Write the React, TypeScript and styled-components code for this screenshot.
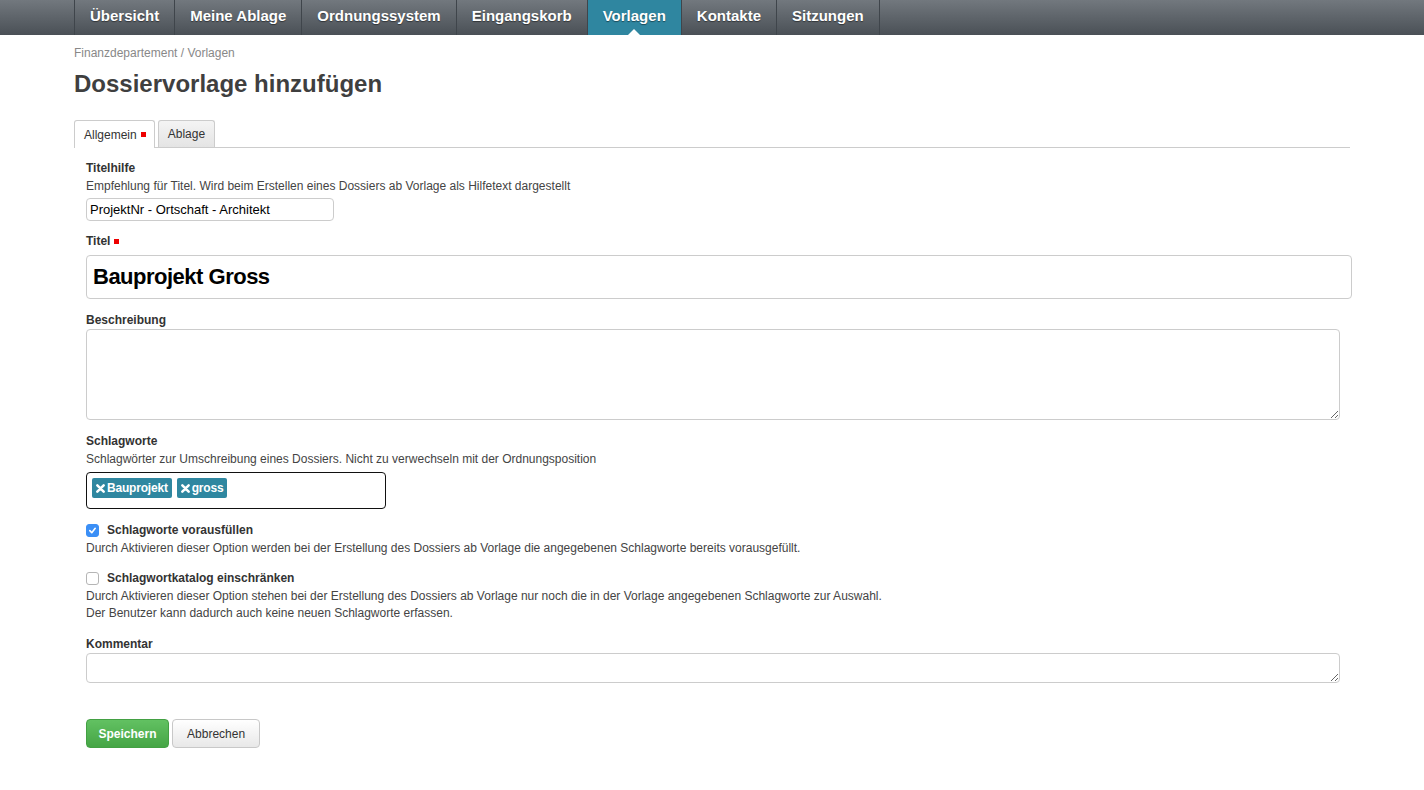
import React from "react";
import styled, { createGlobalStyle } from "styled-components";

const Global = createGlobalStyle`
  html, body { margin: 0; padding: 0; background: #fff; }
  body { font-family: "Liberation Sans", Arial, sans-serif; color: #444; }
  * { box-sizing: border-box; }
`;

const NavBar = styled.nav`
  height: 35px;
  background: linear-gradient(#72787e, #4a5056);
  padding-left: 74px;
  display: flex;
`;

const NavItem = styled.a<{ $active?: boolean }>`
  position: relative;
  display: flex;
  align-items: center;
  padding: 0 15px 4px;
  height: 35px;
  border-left: 1px solid #3f454b;
  font-size: 15px;
  font-weight: bold;
  color: #fff;
  text-shadow: 0 1px 1px rgba(0, 0, 0, 0.45);
  text-decoration: none;
  background: ${(p) => (p.$active ? "#2f86a0" : "transparent")};
  &:last-child { border-right: 1px solid #3f454b; }
`;

const Caret = styled.span`
  position: absolute;
  left: 50%;
  bottom: 0;
  margin-left: -6px;
  width: 0;
  height: 0;
  border-left: 6px solid transparent;
  border-right: 6px solid transparent;
  border-bottom: 6px solid #fff;
`;

const Main = styled.main`
  margin-left: 74px;
  width: 1276px;
`;

const Breadcrumb = styled.div`
  margin-top: 10px;
  font-size: 12px;
  line-height: 16px;
  color: #888;
`;

const Heading = styled.h1`
  margin: 8px 0 0;
  font-size: 24px;
  line-height: 30px;
  font-weight: bold;
  color: #3f3f3f;
`;

const Tabs = styled.div`
  margin-top: 21px;
  display: flex;
  gap: 3px;
  height: 28px;
  border-bottom: 1px solid #ccc;
`;

const Tab = styled.div<{ $active?: boolean }>`
  display: flex;
  align-items: center;
  padding: ${(p) => (p.$active ? "0 8px 0 9px" : "0 9px")};
  height: ${(p) => (p.$active ? "28px" : "27px")};
  font-size: 12px;
  color: #333;
  border: 1px solid #ccc;
  border-bottom: none;
  border-radius: 3px 3px 0 0;
  background: ${(p) => (p.$active ? "#fff" : "linear-gradient(#f4f4f4, #e4e4e4)")};
`;

const Required = styled.span`
  display: inline-block;
  width: 5px;
  height: 5px;
  background: #e00;
  margin-left: 4px;
`;

const Form = styled.form`
  padding-left: 12px;
  padding-top: 11px;
`;

const Field = styled.div<{ $gap?: number }>`
  margin-bottom: ${(p) => p.$gap ?? 11}px;
`;

const Label = styled.label`
  display: flex;
  align-items: center;
  font-size: 12px;
  line-height: 18px;
  font-weight: bold;
  color: #333;
`;

const CheckRow = styled.div`
  display: flex;
  align-items: center;
  gap: 8px;
  font-size: 12px;
  line-height: 18px;
  font-weight: bold;
  color: #333;
`;

const Help = styled.div`
  font-size: 12px;
  line-height: 17px;
  color: #444;
  ${Label} + &, ${CheckRow} + & { margin-top: 1px; }
`;

const SmallInput = styled.input`
  display: block;
  margin-top: 3px;
  width: 248px;
  height: 23px;
  padding: 0 3px;
  border: 1px solid #ccc;
  border-radius: 4px;
  font-family: "Liberation Sans", Arial, sans-serif;
  font-size: 13px;
  color: #000;
  outline: none;
`;

const BigInput = styled.input`
  display: block;
  margin-top: 5px;
  width: 1266px;
  height: 44px;
  padding: 0 6px;
  border: 1px solid #ccc;
  border-radius: 4px;
  font-family: "Liberation Sans", Arial, sans-serif;
  font-size: 22px;
  font-weight: bold;
  letter-spacing: -0.5px;
  color: #000;
  outline: none;
`;

const TextArea = styled.textarea<{ $h: number }>`
  display: block;
  width: 1254px;
  height: ${(p) => p.$h}px;
  margin-top: 0;
  border: 1px solid #ccc;
  border-radius: 4px;
  font-family: "Liberation Sans", Arial, sans-serif;
  font-size: 13px;
  outline: none;
`;

const TagBox = styled.div`
  margin-top: 4px;
  width: 300px;
  height: 37px;
  border: 1px solid #111;
  border-radius: 4px;
  padding: 5px;
  display: flex;
  align-items: flex-start;
  gap: 5px;
`;

const Tag = styled.span`
  display: inline-flex;
  align-items: center;
  gap: 2px;
  height: 20px;
  padding: 0 4px;
  background: #2f87a0;
  border-radius: 2px;
  color: #fff;
  font-size: 12px;
  font-weight: bold;
  letter-spacing: -0.2px;
`;

const Box = styled.span<{ $checked?: boolean }>`
  width: 13px;
  height: 13px;
  border-radius: 3px;
  display: inline-flex;
  align-items: center;
  justify-content: center;
  background: ${(p) => (p.$checked ? "#3b8ff6" : "#fff")};
  border: 1px solid ${(p) => (p.$checked ? "#3b8ff6" : "#b5b5b5")};
`;

const Buttons = styled.div`
  margin-top: 36px;
  display: flex;
  gap: 3px;
`;

const Button = styled.button<{ $primary?: boolean }>`
  height: 29px;
  padding: 0 ${(p) => (p.$primary ? "11.5px" : "14px")};
  border-radius: 4px;
  font-family: "Liberation Sans", Arial, sans-serif;
  font-size: 12px;
  font-weight: ${(p) => (p.$primary ? "bold" : "normal")};
  color: ${(p) => (p.$primary ? "#fff" : "#333")};
  border: 1px solid ${(p) => (p.$primary ? "#43a043" : "#c8c8c8")};
  background: ${(p) =>
    p.$primary ? "linear-gradient(#62c162, #45a545)" : "linear-gradient(#fff, #e8e8e8)"};
`;

const XIcon = () => (
  <svg width="9" height="9" viewBox="0 0 10 10">
    <path d="M1.5 1.5 L8.5 8.5 M8.5 1.5 L1.5 8.5" stroke="#fff" strokeWidth="2.8" strokeLinecap="round" />
  </svg>
);

const Check = () => (
  <svg width="9" height="9" viewBox="0 0 10 10">
    <path d="M2 5.2 L4.2 7.4 L8 2.6" stroke="#fff" strokeWidth="1.8" fill="none" strokeLinecap="round" strokeLinejoin="round" />
  </svg>
);

const navItems = ["Übersicht", "Meine Ablage", "Ordnungssystem", "Eingangskorb", "Vorlagen", "Kontakte", "Sitzungen"];

export default function App() {
  return (
    <>
      <Global />
      <NavBar>
        {navItems.map((n) => (
          <NavItem key={n} $active={n === "Vorlagen"}>
            {n}
            {n === "Vorlagen" && <Caret />}
          </NavItem>
        ))}
      </NavBar>
      <Main>
        <Breadcrumb>Finanzdepartement / Vorlagen</Breadcrumb>
        <Heading>Dossiervorlage hinzufügen</Heading>
        <Tabs>
          <Tab $active>
            Allgemein
            <Required />
          </Tab>
          <Tab>Ablage</Tab>
        </Tabs>
        <Form onSubmit={(e) => e.preventDefault()}>
          <Field>
            <Label>Titelhilfe</Label>
            <Help>Empfehlung für Titel. Wird beim Erstellen eines Dossiers ab Vorlage als Hilfetext dargestellt</Help>
            <SmallInput defaultValue="ProjektNr - Ortschaft - Architekt" />
          </Field>
          <Field $gap={12}>
            <Label>
              Titel
              <Required />
            </Label>
            <BigInput defaultValue="Bauprojekt Gross" />
          </Field>
          <Field $gap={12}>
            <Label>Beschreibung</Label>
            <TextArea $h={91} />
          </Field>
          <Field $gap={12}>
            <Label>Schlagworte</Label>
            <Help>Schlagwörter zur Umschreibung eines Dossiers. Nicht zu verwechseln mit der Ordnungsposition</Help>
            <TagBox>
              <Tag>
                <XIcon />
                Bauprojekt
              </Tag>
              <Tag>
                <XIcon />
                gross
              </Tag>
            </TagBox>
          </Field>
          <Field $gap={12}>
            <CheckRow>
              <Box $checked>
                <Check />
              </Box>
              Schlagworte vorausfüllen
            </CheckRow>
            <Help>Durch Aktivieren dieser Option werden bei der Erstellung des Dossiers ab Vorlage die angegebenen Schlagworte bereits vorausgefüllt.</Help>
          </Field>
          <Field $gap={13}>
            <CheckRow>
              <Box />
              Schlagwortkatalog einschränken
            </CheckRow>
            <Help>Durch Aktivieren dieser Option stehen bei der Erstellung des Dossiers ab Vorlage nur noch die in der Vorlage angegebenen Schlagworte zur Auswahl.</Help>
            <Help>Der Benutzer kann dadurch auch keine neuen Schlagworte erfassen.</Help>
          </Field>
          <Field $gap={0}>
            <Label>Kommentar</Label>
            <TextArea $h={30} />
          </Field>
          <Buttons>
            <Button $primary>Speichern</Button>
            <Button>Abbrechen</Button>
          </Buttons>
        </Form>
      </Main>
    </>
  );
}
